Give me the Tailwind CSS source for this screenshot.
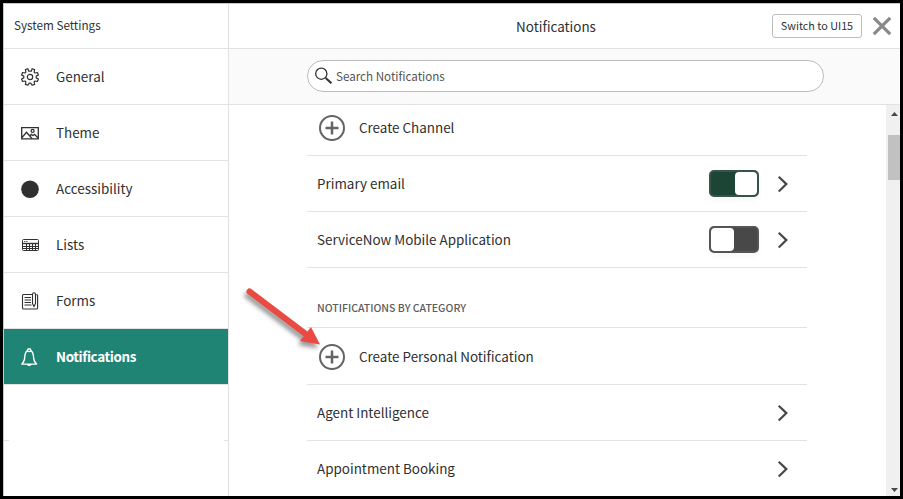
<!DOCTYPE html>
<html lang="en">
<head>
<meta charset="utf-8">
<title>System Settings</title>
<script src="https://cdn.jsdelivr.net/npm/@tailwindcss/browser@4"></script>
</head>
<body class="w-[903px] h-[499px] overflow-hidden bg-black p-[3px] font-['Noto_Sans_CJK_SC','Noto_Sans',sans-serif] text-[13.43px] leading-5 text-[#303030]">
<div class="relative flex h-[493px] w-[897px] overflow-hidden border-l border-t border-[#c8c8c8] bg-white">
  <aside class="flex w-[225px] shrink-0 flex-col border-r border-[#e0e2e5]">
    <h1 class="flex h-[45px] items-center border-b border-[#e0e2e5] pb-[2px] pl-[10px] text-[11.7px]"><span>System Settings</span></h1>
    <nav class="flex flex-col">
      <a class="flex h-14 items-center border-b border-[#e0e2e5] pl-4">
        <svg class="mr-[16px] size-5" viewBox="0 0 20 20" fill="none" stroke="#303030" stroke-width="1.2" stroke-linejoin="round"><circle cx="10" cy="10" r="2.7"/><path d="M8.6 4.2 7.9 1.7 5.4 2.6 5.9 5.1 5 6 2.6 5.5 1.6 8 3.8 9.1V10.9L1.6 12 2.6 14.5 5 14 5.9 14.9 5.4 17.4 7.9 18.3 9.1 16.2H10.9L12.1 18.3 14.6 17.4 14.1 14.9 15 14 17.4 14.5 18.4 12 16.2 10.9V9.1L18.4 8 17.4 5.5 15 6 14.1 5.1 14.6 2.6 12.1 1.7 11.4 4.2Z"/></svg>
        <span class="pb-px">General</span></a>
      <a class="flex h-14 items-center border-b border-[#e0e2e5] pl-4">
        <svg class="mr-[16px] size-5" viewBox="0 0 20 20" fill="none" stroke="#303030" stroke-width="1.3"><path d="M1.7 4.7H18.3V15.8H1.7Z"/><path d="M2 14.5 6.5 9.3 12 15.5M9.8 12.8 11.4 11.4 13 12.5 14.6 11.4 18 15"/><circle cx="12.6" cy="7.9" r="1.5"/></svg>
        <span class="pb-px">Theme</span></a>
      <a class="flex h-14 items-center border-b border-[#e0e2e5] pl-4">
        <svg class="mr-[16px] size-5" viewBox="0 0 20 20"><circle cx="10" cy="10.2" r="8.8" fill="#303030"/></svg>
        <span class="pb-px">Accessibility</span></a>
      <a class="flex h-14 items-center border-b border-[#e0e2e5] pl-4">
        <svg class="mr-[16px] size-5" viewBox="0 0 20 20" fill="none" stroke="#303030"><rect x="2.5" y="4.5" width="16" height="11" rx="1"/><path d="M2 8.5H19" stroke-width="1.4"/><path d="M3 11.5H18M3 13.5H18M6.5 9V15M9.5 9V15M12.5 9V15M15.5 9V15"/><path d="M4 6.5H8" stroke-width=".8" stroke-dasharray="1.4 .8"/></svg>
        <span class="pb-px">Lists</span></a>
      <a class="flex h-14 items-center border-b border-[#e0e2e5] pl-4">
        <svg class="mr-[16px] size-5" viewBox="0 0 20 20" fill="none" stroke="#303030" stroke-width="1.1"><path d="M12 3.5H3.5Q2.5 3.5 2.5 4.5V17Q2.5 18 3.5 18H16.5Q17.6 18 17.6 17V4.5Q17.6 3.5 16.3 3.5"/><path d="M4.5 6.5H11M4.5 9H11M4.5 11.5H11M4.5 14H11.5"/><path d="M12.5 12.5V3.5Q12.5 1.8 14 1.8T15.5 3.5V12.5L14 15.6Z"/></svg>
        <span class="pb-px">Forms</span></a>
      <a class="flex h-14 items-center border-b border-[#e0e2e5] bg-[#208475] pl-4 font-bold tracking-[-0.38px] text-white">
        <svg class="mr-[16px] size-5" viewBox="0 0 20 20" fill="none" stroke="#fff" stroke-width="1.4" stroke-linejoin="round"><path d="M7.4 3.6C4.5 5.2 5.1 9 4.4 12.5 3.8 15.3 2.7 16.1 1.8 17.1H16.6C15.6 16.1 14.5 15.3 13.9 12.5 13.2 9 13.8 5.2 10.9 3.6Q10.8 1.8 9.1 1.8T7.4 3.6ZM7.4 3.8Q9.1 5.2 10.9 3.8M7.2 17.2Q9.1 19.6 11.1 17.2"/></svg>
        <span class="pb-px">Notifications</span></a>
      <div class="flex h-14 items-end justify-between"><i class="h-px w-[5px] bg-[#e0e2e5]"></i><i class="h-px w-1 bg-[#e0e2e5]"></i></div>
    </nav>
  </aside>

  <main class="flex w-[671px] shrink-0 flex-col">
    <header class="grid h-[45px] shrink-0 grid-cols-[1fr_auto_1fr] items-center border-b border-[#e2e2e2] pr-2">
      <h2 class="col-start-2 pr-[9px]">Notifications</h2>
      <div class="flex items-center justify-end gap-[10px]">
        <button class="h-6 w-[90px] rounded-[3px] border border-[#bdbdbd] pb-px text-[10.8px] leading-[21px]"><span class="whitespace-nowrap">Switch to UI15</span></button>
        <svg class="size-5" viewBox="0 0 20 20" stroke="#898989" stroke-width="3.2"><path d="M1.8 1.8 18.2 18.2M18.2 1.8 1.8 18.2"/></svg>
      </div>
    </header>
    <div class="flex h-14 shrink-0 items-center border-b border-[#e2e2e2] bg-[#fafafa] pb-px pl-[78px]">
      <div class="flex h-8 w-[517px] items-center rounded-full border border-[#bcbcbc] bg-white pl-[6px] text-[11.63px] text-[#555]">
        <svg class="mr-[2px] size-5" viewBox="0 0 20 20" fill="none" stroke="#303030"><circle cx="7.3" cy="7.7" r="5.6" stroke-width="1.3"/><path d="M11.7 11.9 17.4 17.3" stroke-width="2"/></svg>
        <span>Search Notifications</span>
      </div>
    </div>
    <div class="flex h-[391px] shrink-0">
      <section class="ml-[78px] w-[500px]">
        <div class="flex h-[51px] items-center border-b border-[#e2e2e2] pb-[5px] pl-[11px]">
          <svg class="mr-[13px] size-7" viewBox="0 0 28 28" fill="none" stroke="#646464" stroke-width="2"><circle cx="14" cy="14" r="12"/><path d="M14 7.5V20.5M7.5 14H20.5" stroke-width="2.5"/></svg>
          <span class="pb-[2px]">Create Channel</span></div>
        <div class="flex h-14 items-center border-b border-[#e2e2e2] pl-[10px]">
          <span class="flex-1 pb-[2px]">Primary email</span>
          <span class="flex h-[27px] w-[50px] justify-end rounded-[5px] border-2 border-[#385448] bg-[#1d4536] shadow-[0_4px_6px_rgba(0,0,0,0.03)]"><i class="h-[23px] w-[22px] rounded-[4px] bg-white"></i></span>
          <svg class="ml-[18px] mr-[17px] h-5 w-[13px]" viewBox="0 0 13 20" fill="none" stroke="#484848" stroke-width="2.2"><path d="M1.7 2.7 9.4 10.1 1.7 17.5"/></svg></div>
        <div class="flex h-14 items-center border-b border-[#e2e2e2] pl-[10px]">
          <span class="flex-1 pb-[2px]">ServiceNow Mobile Application</span>
          <span class="flex h-[27px] w-[50px] rounded-[5px] border-2 border-[#555] bg-[#484848] shadow-[0_4px_6px_rgba(0,0,0,0.03)]"><i class="h-[23px] w-[23px] rounded-[4px] bg-white"></i></span>
          <svg class="ml-[18px] mr-[17px] h-5 w-[13px]" viewBox="0 0 13 20" fill="none" stroke="#484848" stroke-width="2.2"><path d="M1.7 2.7 9.4 10.1 1.7 17.5"/></svg></div>
        <h3 class="flex h-[60px] items-end border-b border-[#e2e2e2] pb-[9px] pl-[10px] text-[10.5px] font-medium text-[#5c5c5c]"><span>NOTIFICATIONS BY CATEGORY</span></h3>
        <div class="flex h-[57px] items-center border-b border-[#e2e2e2] pl-[11px] pt-px">
          <svg class="mr-[13px] size-7" viewBox="0 0 28 28" fill="none" stroke="#646464" stroke-width="2"><circle cx="14" cy="14" r="12"/><path d="M14 7.5V20.5M7.5 14H20.5" stroke-width="2.5"/></svg>
          <span class="pb-px">Create Personal Notification</span></div>
        <div class="flex h-14 items-center border-b border-[#e2e2e2] pl-[10px]">
          <span class="flex-1 pb-[2px]">Agent Intelligence</span>
          <svg class="mr-[17px] h-5 w-[13px]" viewBox="0 0 13 20" fill="none" stroke="#484848" stroke-width="2.2"><path d="M1.7 2.7 9.4 10.1 1.7 17.5"/></svg></div>
        <div class="flex h-[55px] items-center pl-[10px]">
          <span class="flex-1 pb-[2px]">Appointment Booking</span>
          <svg class="mr-[17px] h-5 w-[13px]" viewBox="0 0 13 20" fill="none" stroke="#484848" stroke-width="2.2"><path d="M1.7 2.7 9.4 10.1 1.7 17.5"/></svg></div>
      </section>
      <div class="ml-auto flex w-[14px] flex-col items-end bg-[#f0f0f0] pt-[7px]">
        <svg class="mr-[2px] h-1 w-[7px]" viewBox="0 0 7 4" fill="#484848"><path d="M0 4 3.5 0 7 4Z"/></svg>
        <div class="mt-[19px] h-[45px] w-3 bg-[#c1c1c1]"></div>
        <svg class="mb-[4px] mr-[2px] mt-auto h-1 w-[7px]" viewBox="0 0 7 4" fill="#484848"><path d="M0 0 3.5 4 7 0Z"/></svg>
      </div>
    </div>
  </main>

  <svg class="absolute left-[231px] top-[276px] h-[84px] w-[96px] drop-shadow-[-2px_4px_2px_rgba(0,0,0,0.4)]" viewBox="235 280 96 84"><path d="M249.5 291.5 305 333.5" stroke="#e94b43" stroke-width="6" stroke-linecap="round"/><path d="M320 344.5 311 327 300 341Z" fill="#e94b43"/></svg>
</div>
</body>
</html>
